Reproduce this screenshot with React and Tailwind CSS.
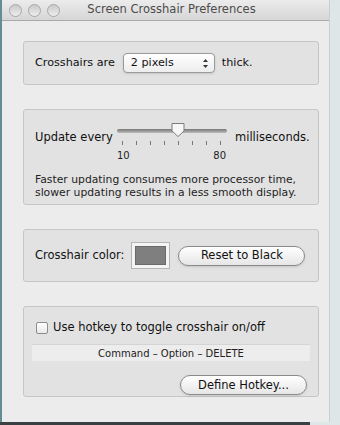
export default function App() {
  const ticks = [0, 1, 2, 3, 4, 5, 6, 7];
  return (
    <div className="w-[340px] h-[425px] bg-[#dfe6e8] relative overflow-hidden" style={{ fontFamily: '"DejaVu Sans", "Liberation Sans", sans-serif' }}>
      <div className="flex h-[422px]">
        <div className="w-[2px] bg-[#5f8f95]" />
        <div className="w-[328px] flex flex-col bg-[#ececec] border-r border-[#c9cfd1]">
          {/* Title bar */}
          <div className="h-[21px] flex items-center relative bg-gradient-to-b from-[#ececec] to-[#d6d6d6] border-b border-[#a9a9a9]">
            <div className="flex gap-[6px] pl-[7px]">
              {[0, 1, 2].map((i) => (
                <div key={i} className="w-[13px] h-[13px] rounded-full bg-gradient-to-b from-[#c9c9c9] to-[#eeeeee] border border-[#a8a8a8]" />
              ))}
            </div>
            <div className="flex-1 text-center text-[11.5px] text-[#4b4b4b] pr-[46px]">Screen Crosshair Preferences</div>
          </div>

          <div className="flex flex-col pl-[21px] pr-[10px] pt-[20px] gap-[24px]">
            {/* Box 1 */}
            <div className="h-[44px] w-[296px] rounded-[3px] border border-[#c6c6c6] bg-[#e2e2e2] flex items-center pl-[11px] text-[11.2px] text-[#111]">
              <span>Crosshairs are</span>
              <div className="ml-[8px] w-[92px] h-[20px] rounded-[4px] border border-[#9a9a9a] bg-gradient-to-b from-[#ffffff] to-[#ededed] flex items-center pl-[7px] pr-[5px] shadow-sm">
                <span className="flex-1">2 pixels</span>
                <svg width="7" height="11" viewBox="0 0 7 11">
                  <path d="M3.5 1 L6 4 H1 Z" fill="#333" />
                  <path d="M3.5 10 L6 7 H1 Z" fill="#333" />
                </svg>
              </div>
              <span className="ml-[7px]">thick.</span>
            </div>

            {/* Box 2 */}
            <div className="h-[96px] w-[296px] rounded-[3px] border border-[#c6c6c6] bg-[#e2e2e2] flex flex-col pl-[11px] pt-[11px] text-[#111]">
              <div className="flex items-start">
                <span className="text-[11.5px] mt-[8px] w-[82px]">Update every</span>
                <div className="w-[110px] relative h-[48px]">
                  <div className="absolute left-[0px] right-[0px] top-[8px] h-[4px] rounded-full bg-gradient-to-b from-[#777] to-[#bbb]" />
                  <svg className="absolute left-[53px] top-[1px]" width="16" height="16" viewBox="0 0 16 16">
                    <path d="M2 1.5 H14 V9 L8 14.5 L2 9 Z" fill="#f7f7f7" stroke="#7d7d7d" strokeWidth="1" />
                  </svg>
                  <div className="absolute left-[5px] right-[6px] top-[20px] flex justify-between">
                    {ticks.map((t) => (
                      <div key={t} className="w-[1px] h-[4px] bg-[#777]" />
                    ))}
                  </div>
                  <div className="absolute left-[0px] right-[1px] top-[27px] flex justify-between text-[10px] text-[#222]">
                    <span>10</span>
                    <span>80</span>
                  </div>
                </div>
                <span className="text-[11.5px] mt-[8px] ml-[8px]">milliseconds.</span>
              </div>
              <div className="text-[10.8px] leading-[13px] text-[#222] mt-[4px]">
                Faster updating consumes more processor time,<br />
                slower updating results in a less smooth display.
              </div>
            </div>

            {/* Box 3 */}
            <div className="h-[53px] w-[296px] rounded-[3px] border border-[#c6c6c6] bg-[#e2e2e2] flex items-center pl-[11px] text-[11.5px] text-[#111]">
              <span>Crosshair color:</span>
              <div className="ml-[7px] w-[39px] h-[27px] border border-[#b5b5b5] bg-[#f4f4f4] p-[3px]">
                <div className="w-full h-full bg-[#7f7f7f] border border-[#6a6a6a]" />
              </div>
              <button className="ml-[8px] w-[127px] h-[20px] rounded-full border border-[#8a8a8a] bg-gradient-to-b from-[#ffffff] to-[#e6e6e6] text-[11.5px] text-[#111] shadow-sm">
                Reset to Black
              </button>
            </div>

            {/* Box 4 */}
            <div className="h-[91px] w-[296px] rounded-[3px] border border-[#c6c6c6] bg-[#e2e2e2] flex flex-col pt-[12px] text-[#111]">
              <div className="flex items-center pl-[12px] text-[11.5px]">
                <div className="w-[12px] h-[12px] rounded-[2px] border border-[#8d8d8d] bg-gradient-to-b from-[#ffffff] to-[#e9e9e9]" />
                <span className="ml-[5px]">Use hotkey to toggle crosshair on/off</span>
              </div>
              <div className="mx-[8px] mt-[8px] h-[17px] bg-[#ededed] border-t border-[#d4d4d4] flex items-center justify-center text-[10px] text-[#222]">
                Command – Option – DELETE
              </div>
              <div className="flex justify-end pr-[11px] mt-[14px]">
                <button className="w-[127px] h-[20px] rounded-full border border-[#8a8a8a] bg-gradient-to-b from-[#ffffff] to-[#e6e6e6] text-[11.5px] text-[#111] shadow-sm">
                  Define Hotkey...
                </button>
              </div>
            </div>
          </div>
        </div>
      </div>
      <div className="h-[3px] w-[310px] bg-[#3a3f42]" />
    </div>
  );
}
